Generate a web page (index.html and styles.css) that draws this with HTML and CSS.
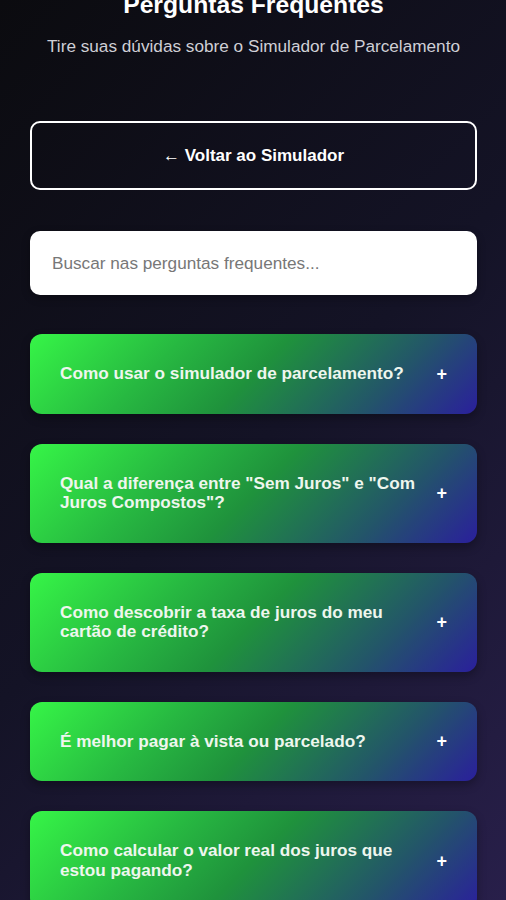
FILE: index.html
```html
<!DOCTYPE html>
<html lang="pt-BR">
<head>
    <meta charset="UTF-8">
    <meta name="viewport" content="width=device-width, initial-scale=1.0">
    <title>Perguntas Frequentes</title>
    <link rel="stylesheet" href="styles.css">
</head>
<body>

    <div class="page">
        <header class="header">
            <h1>Perguntas Frequentes</h1>
            <p>Tire suas dúvidas sobre o Simulador de Parcelamento</p>
        </header>

        <button class="back-btn">← Voltar ao Simulador</button>

        <input type="text" class="search" placeholder="Buscar nas perguntas frequentes...">

        <div class="faq-list">
            <div class="faq-item">
                <span class="question">Como usar o simulador de parcelamento?</span>
                <span class="toggle">+</span>
            </div>
            <div class="faq-item">
                <span class="question">Qual a diferença entre "Sem Juros" e "Com Juros Compostos"?</span>
                <span class="toggle">+</span>
            </div>
            <div class="faq-item">
                <span class="question">Como descobrir a taxa de juros do meu cartão de crédito?</span>
                <span class="toggle">+</span>
            </div>
            <div class="faq-item">
                <span class="question">É melhor pagar à vista ou parcelado?</span>
                <span class="toggle">+</span>
            </div>
            <div class="faq-item">
                <span class="question">Como calcular o valor real dos juros que estou pagando?</span>
                <span class="toggle">+</span>
            </div>
        </div>
    </div>

</body>
</html>
```

FILE: styles.css
```css
* {
    margin: 0;
    padding: 0;
    box-sizing: border-box;
}

body {
    font-family: 'Liberation Sans', Arial, sans-serif;
    background: linear-gradient(135deg, #0b0b0f 0%, #141326 50%, #281f4a 100%);
    background-attachment: fixed;
    min-height: 100vh;
    color: #ffffff;
    overflow: hidden;
}

.page {
    padding: 0 29px 0 30px;
    margin-top: -9px;
}

.header {
    text-align: center;
}

.header h1 {
    font-size: 24.7px;
    line-height: 28.8px;
    font-weight: bold;
    margin-bottom: 17px;
}

.header p {
    font-size: 17.2px;
    line-height: 19.2px;
    color: #cfcfd6;
    margin-bottom: 65px;
}

.back-btn {
    display: block;
    width: 100%;
    height: 69px;
    background: transparent;
    border: 2px solid #ffffff;
    border-radius: 10px;
    color: #ffffff;
    font-family: inherit;
    font-size: 17px;
    font-weight: bold;
    cursor: pointer;
    margin-bottom: 41px;
}

.search {
    display: block;
    width: 100%;
    height: 64px;
    padding: 0 22px;
    border: none;
    border-radius: 10px;
    background-color: #ffffff;
    font-family: inherit;
    font-size: 17.2px;
    outline: none;
    box-shadow: 0 3px 8px rgba(0, 0, 0, 0.3);
    margin-bottom: 39px;
}

.search::placeholder {
    color: #777777;
}

.faq-list {
    display: flex;
    flex-direction: column;
    gap: 30px;
}

.faq-item {
    display: flex;
    align-items: center;
    gap: 14px;
    padding: 30px;
    border-radius: 12px;
    background: linear-gradient(135deg, #36f547 0%, #27b841 30%, #1f923c 50%, #23546a 78%, #2a1f9c 100%);
    box-shadow: 0 4px 10px rgba(0, 0, 0, 0.3);
    cursor: pointer;
}

.question {
    flex: 1;
    font-size: 17.2px;
    line-height: 19.5px;
    font-weight: bold;
    color: #eef6ee;
}

.toggle {
    font-size: 18px;
    line-height: 1;
    font-weight: bold;
    color: #ffffff;
}
```
